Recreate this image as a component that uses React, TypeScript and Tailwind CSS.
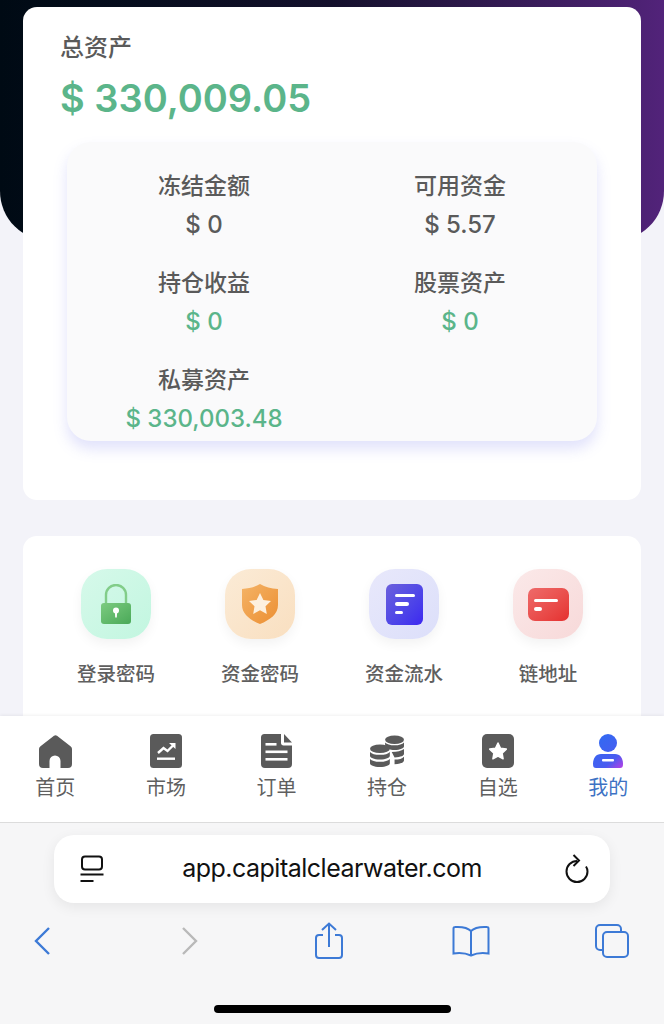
import type { ReactNode } from "react"

function Stat({ label, value, green }: { label: string; value: string; green?: boolean }) {
  return (
    <div className="flex flex-col items-center">
      <div className="text-[23px] leading-[34px] font-medium text-[#5a5a5a]">{label}</div>
      <div className={`mt-[5px] text-[24px] leading-[34px] font-medium ${green ? "text-[#5bb58a]" : "text-[#5a5a5a]"}`}>{value}</div>
    </div>
  )
}

function Shortcut({ label, bg, children }: { label: string; bg: string; children: ReactNode }) {
  return (
    <div className="flex flex-col items-center w-[144px]">
      <div className={`w-[70px] h-[70px] rounded-[26px] flex items-center justify-center shadow-[0_5px_12px_rgba(0,0,0,0.05)] ${bg}`}>
        {children}
      </div>
      <div className="mt-[21px] text-[19.5px] leading-[28px] font-medium text-[#5f5f5f]">{label}</div>
    </div>
  )
}

function Tab({ label, active, children }: { label: string; active?: boolean; children: ReactNode }) {
  return (
    <div className="flex flex-col items-center w-[110.6px]">
      <div className="h-[34px] w-[40px] flex items-center justify-center">{children}</div>
      <div className={`mt-[6px] text-[20px] leading-[28px] ${active ? "text-[#3d72c4]" : "text-[#5f5f5f]"}`}>{label}</div>
    </div>
  )
}

export default function App() {
  return (
    <div className="w-[664px] h-[1024px] overflow-hidden flex flex-col bg-[#f3f3f9] font-['Inter','Noto_Sans_CJK_SC',sans-serif]">
      <div className="h-[716px] overflow-hidden">
        <div className="h-[241px] rounded-b-[50px] bg-gradient-to-r from-[#000a14] via-[#14102c] to-[#52237a]" />
        <div className="-mt-[234px] mx-[23px] h-[493px] bg-white rounded-[14px] pt-[24px] px-[37px]">
          <div className="text-[24px] leading-[34px] font-medium text-[#5a5a5a]">总资产</div>
          <div className="mt-[10px] text-[38px] leading-[46px] font-semibold text-[#5bb58a]">$ 330,009.05</div>
          <div className="mt-[21px] ml-[7px] w-[530px] h-[299px] rounded-[24px] bg-[#fafafb] shadow-[0_8px_14px_rgba(120,125,235,0.22)] pt-[27px]">
            <div className="grid grid-cols-[274px_238px] gap-y-[24px]">
              <Stat label="冻结金额" value="$ 0" />
              <Stat label="可用资金" value="$ 5.57" />
              <Stat label="持仓收益" value="$ 0" green />
              <Stat label="股票资产" value="$ 0" green />
              <Stat label="私募资产" value="$ 330,003.48" green />
            </div>
          </div>
        </div>
        <div className="mt-[36px] mx-[23px] h-[220px] bg-white rounded-[14px] pt-[33px] flex justify-center">
          <Shortcut label="登录密码" bg="bg-gradient-to-br from-[#d6f9ea] to-[#c2f6e0]">
            <svg width="32" height="41" viewBox="0 0 32 41">
              <defs>
                <linearGradient id="lk" x1="0" y1="0" x2="1" y2="1"><stop offset="0" stopColor="#7ccb80" /><stop offset="1" stopColor="#4aa958" /></linearGradient>
              </defs>
              <path d="M6 20V11a10 10 0 0 1 20 0v9" fill="none" stroke="#82cd89" strokeWidth="2.4" />
              <rect x="1" y="19" width="30" height="21" rx="3" fill="url(#lk)" />
              <circle cx="16" cy="26.500" r="3" fill="#fff" />
              <path d="M14.8 27h2.400l-.4 6.500h-1.600z" fill="#fff" />
            </svg>
          </Shortcut>
          <Shortcut label="资金密码" bg="bg-gradient-to-br from-[#fbebd6] to-[#f9dfc0]">
            <svg width="38" height="42" viewBox="0 0 38 42">
              <defs>
                <linearGradient id="sh" x1="0" y1="0" x2="1" y2="1"><stop offset="0" stopColor="#f4b366" /><stop offset="1" stopColor="#ec8f33" /></linearGradient>
              </defs>
              <path d="M19 1c5 3 11 4.500 18 5v16c0 9-8 15-18 19C9 37 1 31 1 22V6c7-.5 13-2 18-5z" fill="url(#sh)" />
              <path d="M19 10l3.400 6.900 7.600 1.100-5.500 5.300 1.300 7.600-6.800-3.600-6.800 3.600 1.300-7.600L8 18l7.600-1.100z" fill="#fdf0df" />
            </svg>
          </Shortcut>
          <Shortcut label="资金流水" bg="bg-gradient-to-br from-[#e8e8fb] to-[#dcdffa]">
            <div className="w-[37px] h-[41px] rounded-[6px] bg-gradient-to-br from-[#6b5fdc] to-[#3d25f0] flex flex-col gap-[5px] pt-[10px] pl-[9px]">
              <div className="w-[20px] h-[3.5px] rounded-full bg-white" />
              <div className="w-[14px] h-[3.5px] rounded-full bg-white" />
              <div className="w-[8px] h-[3.5px] rounded-full bg-white" />
            </div>
          </Shortcut>
          <Shortcut label="链地址" bg="bg-gradient-to-br from-[#fbe9e9] to-[#f7d9d9]">
            <div className="w-[41px] h-[33px] rounded-[7px] bg-gradient-to-br from-[#ee6a6a] to-[#e52f2f] flex flex-col gap-[5px] pt-[11px] pl-[6px]">
              <div className="w-[24px] h-[3.5px] rounded-full bg-white" />
              <div className="w-[8px] h-[3.5px] rounded-full bg-white" />
            </div>
          </Shortcut>
        </div>
      </div>

      <div className="h-[107px] bg-white border-b border-[#dcdcdc] shadow-[0_-1px_3px_rgba(0,0,0,0.06)] pt-[18px] flex relative">
        <Tab label="首页">
          <svg width="33" height="33" viewBox="0 0 33 33">
            <path d="M15 .8a2.500 2.500 0 0 1 3 0l13.500 10.500c1 .8 1.500 1.800 1.500 3V29a4 4 0 0 1-4 4h-7.500v-7a5.500 5.500 0 0 0-11 0v7H4a4 4 0 0 1-4-4V14.300c0-1.200.5-2.200 1.500-3z" fill="#5a5a5a" />
          </svg>
        </Tab>
        <Tab label="市场">
          <svg width="32" height="34" viewBox="0 0 32 34">
            <rect width="32" height="34" rx="3.500" fill="#5a5a5a" />
            <path d="M8 19l5.500-5 4 3L24 10.500" fill="none" stroke="#fff" strokeWidth="2.400" />
            <path d="M19 9h6.500v6z" fill="#fff" />
            <rect x="7" y="23.500" width="18" height="2.400" fill="#fff" />
          </svg>
        </Tab>
        <Tab label="订单">
          <svg width="31" height="34" viewBox="0 0 31 34">
            <path d="M3.500 0H20v9c0 1.500 1 2.500 2.500 2.500H31V30a4 4 0 0 1-4 4H4a4 4 0 0 1-4-4V3.500A3.500 3.500 0 0 1 3.500 0z" fill="#5a5a5a" />
            <path d="M23 0l8 8.500h-8z" fill="#5a5a5a" />
            <rect x="4.500" y="9" width="11" height="2.600" fill="#fff" />
            <rect x="4.500" y="16.500" width="22" height="2.600" fill="#fff" />
            <rect x="4.500" y="24" width="22" height="2.600" fill="#fff" />
          </svg>
        </Tab>
        <Tab label="持仓">
          <svg width="34" height="34" viewBox="0 0 36 34">
            <ellipse cx="26" cy="5" rx="10" ry="4.500" fill="#5a5a5a" />
            <path d="M16 8c2 2 5 3 10 3s8-1 10-3v4c0 2-4 4-10 4-5 0-10-2-10-4z" fill="#5a5a5a" />
            <path d="M23 18c6 0 10-1 13-3v5c0 2-3 3.500-10 4z" fill="#5a5a5a" />
            <path d="M26 26c5 0 8-1 10-3v4c0 2-4 4-10 4z" fill="#5a5a5a" />
            <ellipse cx="10.500" cy="14.500" rx="10.500" ry="4.500" fill="#5a5a5a" />
            <path d="M0 18c2 2 5 3 10.500 3s8.500-1 10.500-3v4c0 2-4 4-10.500 4S0 24 0 22z" fill="#5a5a5a" />
            <path d="M0 25.500c2 2 5 3 10.500 3s8.500-1 10.500-3V30c0 2-4 4-10.500 4S0 32 0 30z" fill="#5a5a5a" />
          </svg>
        </Tab>
        <Tab label="自选">
          <svg width="32" height="34" viewBox="0 0 32 34">
            <rect width="32" height="34" rx="5" fill="#5a5a5a" />
            <path d="M16 9l2.500 5.300 5.800.8-4.200 4 1 5.700-5.100-2.700-5.100 2.700 1-5.700-4.200-4 5.800-.8z" fill="#fff" stroke="#fff" strokeWidth="1.500" strokeLinejoin="round" />
          </svg>
        </Tab>
        <Tab label="我的" active>
          <svg width="30" height="34" viewBox="0 0 30 34">
            <defs>
              <linearGradient id="me" gradientUnits="userSpaceOnUse" x1="2" y1="2" x2="30" y2="34"><stop offset="0" stopColor="#2f6bf2" /><stop offset="0.7" stopColor="#4a5cf0" /><stop offset="1" stopColor="#b93ee6" /></linearGradient>
            </defs>
            <circle cx="15" cy="9" r="9" fill="url(#me)" />
            <path d="M8 20h14c5 0 8 4 8 10 0 3-1 4-3 4H3c-2 0-3-1-3-4 0-6 3-10 8-10z" fill="url(#me)" />
            <rect x="9" y="25" width="12" height="2.600" rx="1" fill="#fff" />
          </svg>
        </Tab>
      </div>

      <div className="flex-1 bg-[#f6f6f7] flex flex-col items-center relative">
        <div className="mt-[12px] w-[556px] h-[68px] bg-white rounded-[20px] shadow-[0_4px_14px_rgba(0,0,0,0.07)] flex items-center justify-between pl-[25px] pr-[20px]">
          <svg width="26" height="28" viewBox="0 0 26 28" fill="none" stroke="#111" strokeWidth="2">
            <rect x="3" y="1.500" width="20" height="13" rx="3" />
            <path d="M1.500 19.500h23M1.500 26h13" />
          </svg>
          <div className="mr-[5px] text-[25px] tracking-[-0.5px] text-[#111]">app.capitalclearwater.com</div>
          <svg width="26" height="30" viewBox="0 0 26 30" fill="none" stroke="#111" strokeWidth="2">
            <path d="M13 7a10.500 10.500 0 1 0 10.500 10.500c0-2-.5-3.500-1.500-5" />
            <path d="M9.500 1L15 6.500 9.500 12" />
          </svg>
        </div>
        <div className="mt-[20px] w-full h-[36px] flex items-center pl-[33px]">
          <svg width="20" height="32" viewBox="0 0 20 32" fill="none" stroke="#3d7ad6" strokeWidth="2.400">
            <path d="M16 3L3 16l13 13" />
          </svg>
          <svg className="ml-[126px]" width="20" height="32" viewBox="0 0 20 32" fill="none" stroke="#b9b9b9" strokeWidth="2.400">
            <path d="M4 3l13 13L4 29" />
          </svg>
          <svg className="ml-[115px]" width="30" height="38" viewBox="0 0 30 38" fill="none" stroke="#3d7ad6" strokeWidth="2">
            <path d="M9 13H5a3 3 0 0 0-3 3v17a3 3 0 0 0 3 3h20a3 3 0 0 0 3-3V16a3 3 0 0 0-3-3h-4M15 25V2M8 8l7-6.500L22 8" />
          </svg>
          <svg className="ml-[108px]" width="38" height="32" viewBox="0 0 38 32" fill="none" stroke="#3d7ad6" strokeWidth="2">
            <path d="M19 6C16 3 11 1.500 3 2a1.500 1.500 0 0 0-1.500 1.500v25c5-.8 12-.5 17.500 2 5.500-2.500 12.500-2.800 17.500-2V3.500A1.500 1.500 0 0 0 35 2c-8-.5-13 1-16 4zM19 6v24" />
          </svg>
          <svg className="ml-[105px]" width="34" height="34" viewBox="0 0 34 34" fill="none" stroke="#3d7ad6" strokeWidth="2">
            <rect x="8" y="8" width="25" height="25" rx="4" />
            <path d="M8 26H5a4 4 0 0 1-4-4V5a4 4 0 0 1 4-4h17a4 4 0 0 1 4 4v3" />
          </svg>
        </div>
        <div className="absolute bottom-[11px] left-[214px] w-[237px] h-[8px] rounded-full bg-black" />
      </div>
    </div>
  )
}
